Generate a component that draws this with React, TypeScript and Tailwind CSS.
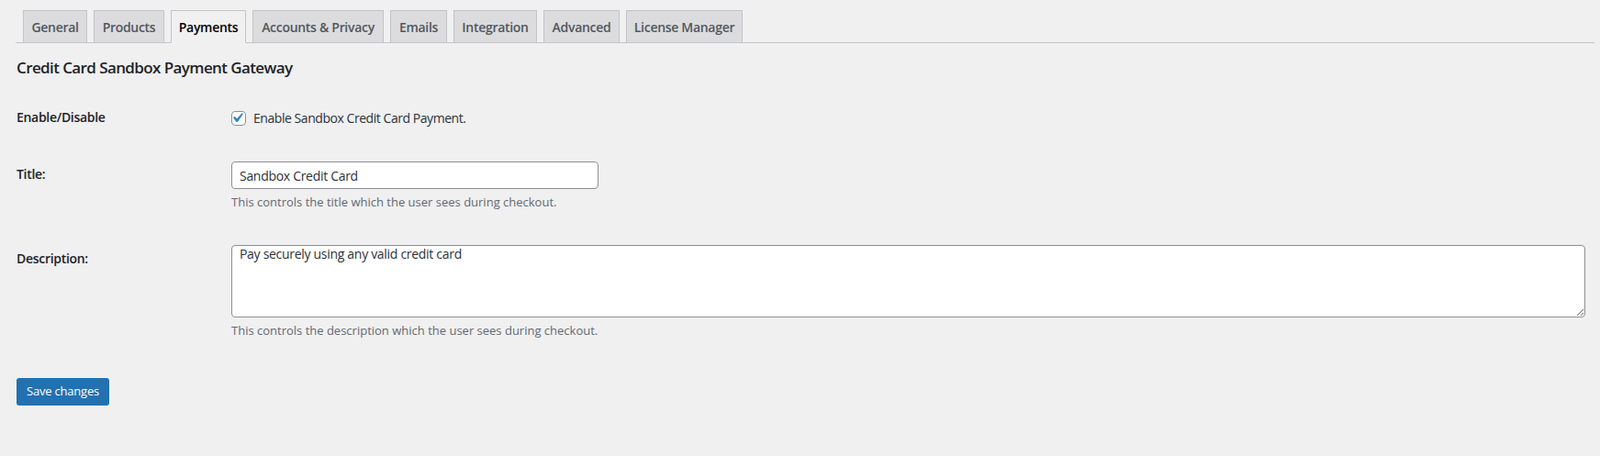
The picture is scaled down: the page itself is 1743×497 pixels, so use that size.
import { useState } from "react";

const tabs = [
  { name: "General", w: "w-[70px]" },
  { name: "Products", w: "w-[77px]" },
  { name: "Payments", w: "w-[82px]" },
  { name: "Accounts & Privacy", w: "w-[143px]" },
  { name: "Emails", w: "w-[62px]" },
  { name: "Integration", w: "w-[91px]" },
  { name: "Advanced", w: "w-[83px]" },
  { name: "License Manager", w: "w-[127px]" },
];

export default function App() {
  const [active] = useState("Payments");
  const [enabled, setEnabled] = useState(true);
  const [title, setTitle] = useState("Sandbox Credit Card");
  const [desc, setDesc] = useState("Pay securely using any valid credit card");

  return (
    <div
      className="min-h-[497px] bg-[#f0f0f1] pl-[17px] pr-[6px] text-[#1d2327]"
      style={{ fontFamily: '"Open Sans", "Noto Sans", sans-serif' }}
    >
      {/* tabs */}
      <nav className="flex gap-[7px] border-b border-[#c3c4c7] pl-[8px] pt-[11px]">
        {tabs.map((t) => (
          <a
            key={t.name}
            className={
              "-mb-px flex h-[36px] items-center justify-center whitespace-nowrap border text-[14px] font-semibold tracking-[-0.3px] " +
              t.w +
              (t.name === active
                ? " border-[#c3c4c7] border-b-[#f0f0f1] bg-[#f0f0f1] text-black"
                : " border-[#c3c4c7] bg-[#dcdcde] text-[#50575e]")
            }
          >
            {t.name}
          </a>
        ))}
      </nav>

      <div className="ml-px">
        <h2 className="mt-[16px] text-[17px] font-semibold leading-[22px] tracking-[-0.6px]">
          Credit Card Sandbox Payment Gateway
        </h2>

        <div className="mt-[14px] pr-[10px]">
          {/* enable row */}
          <div className="flex h-[62px]">
            <div className="w-[234px] pt-[20px] text-[14px] font-semibold leading-[18px] tracking-[-0.3px]">
              Enable/Disable
            </div>
            <label className="mt-[22px] flex h-[16px] items-center gap-[8px] text-[14px] leading-[18px] tracking-[-0.45px] text-[#2c3338]">
              <span
                onClick={() => setEnabled(!enabled)}
                className="relative h-[16px] w-[16px] rounded-[4px] border border-[#8c8f94] bg-white"
              >
                {enabled && (
                  <svg
                    width="21"
                    height="21"
                    viewBox="0 0 20 20"
                    className="absolute left-[-5px] top-[-4px]"
                  >
                    <path
                      d="M14.83 4.89l1.34.94-5.81 8.38H9.02L5.78 9.670l1.34-1.25 2.57 2.4z"
                      fill="#3582c4"
                    />
                  </svg>
                )}
              </span>
              Enable Sandbox Credit Card Payment.
            </label>
          </div>

          {/* title row */}
          <div className="flex h-[91px]">
            <div className="w-[234px] pt-[20px] text-[14px] font-semibold leading-[18px] tracking-[-0.3px]">
              Title:
            </div>
            <div className="pt-[15px]">
              <input
                value={title}
                onChange={(e) => setTitle(e.target.value)}
                className="h-[30px] w-[400px] rounded-[4px] border border-[#8c8f94] bg-white px-[8px] text-[14px] tracking-[-0.3px] text-[#2c3338] outline-none"
              />
              <p className="mt-[5px] text-[13px] leading-[18px] text-[#646970]">
                This controls the title which the user sees during checkout.
              </p>
            </div>
          </div>

          {/* description row */}
          <div className="flex">
            <div className="w-[234px] shrink-0 pt-[21px] text-[14px] font-semibold leading-[18px] tracking-[-0.3px]">
              Description:
            </div>
            <div className="flex-1 pt-[15px]">
              <textarea
                value={desc}
                onChange={(e) => setDesc(e.target.value)}
                className="block h-[79px] w-full rounded-[4px] border border-[#8c8f94] bg-white px-[8px] py-[0px] text-[14px] leading-[18px] tracking-[-0.3px] text-[#2c3338] outline-none"
              />
              <p className="mt-[5px] text-[13px] leading-[18px] text-[#646970]">
                This controls the description which the user sees during checkout.
              </p>
            </div>
          </div>
        </div>

        <button className="mt-[43px] h-[30px] w-[101px] rounded-[3px] bg-[#2271b1] text-[13px] tracking-[-0.2px] text-white">
          Save changes
        </button>
      </div>
    </div>
  );
}
